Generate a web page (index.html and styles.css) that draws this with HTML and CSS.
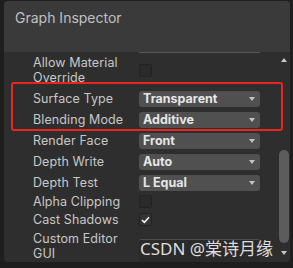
FILE: index.html
```html
<!DOCTYPE html>
<html lang="en">
<head>
    <meta charset="UTF-8">
    <meta name="viewport" content="width=device-width, initial-scale=1.0">
    <title>Graph Inspector</title>
    <link rel="stylesheet" href="styles.css">
</head>
<body>
    <div class="panel">
        <div class="header">Graph Inspector</div>
        <div class="body">
            <div class="fields">
                <div class="cut-field"></div>
                <div class="row tall">
                    <div class="label">Allow Material<br>Override</div>
                    <span class="checkbox"></span>
                </div>
                <div class="row first-drop">
                    <div class="label">Surface Type</div>
                    <div class="dropdown">Transparent</div>
                </div>
                <div class="row">
                    <div class="label">Blending Mode</div>
                    <div class="dropdown">Additive</div>
                </div>
                <div class="row">
                    <div class="label">Render Face</div>
                    <div class="dropdown">Front</div>
                </div>
                <div class="row">
                    <div class="label">Depth Write</div>
                    <div class="dropdown">Auto</div>
                </div>
                <div class="row">
                    <div class="label">Depth Test</div>
                    <div class="dropdown">L Equal</div>
                </div>
                <div class="row check-row short">
                    <div class="label">Alpha Clipping</div>
                    <span class="checkbox"></span>
                </div>
                <div class="row check-row">
                    <div class="label">Cast Shadows</div>
                    <span class="checkbox checked">
                        <svg width="9" height="8" viewBox="0 0 9 8"><path d="M1 4.2 L3.4 6.4 L8 1.2" fill="none" stroke="#f0f0f0" stroke-width="1.6"/></svg>
                    </span>
                </div>
                <div class="row tall editor-row">
                    <div class="label">Custom Editor<br>GUI</div>
                    <div class="object-field"></div>
                </div>
            </div>
            <div class="scrollbar">
                <span class="arrow up"></span>
                <div class="thumb"></div>
                <span class="arrow down"></span>
            </div>
        </div>
        <div class="highlight"></div>
    </div>
    <div class="watermark">CSDN @棠诗月缘</div>
</body>
</html>
```

FILE: styles.css
```css
body {
    margin: 0;
    padding: 1px 3px 0 4px;
    width: 286px;
    height: 267px;
    background-color: #1e1e1e;
    font-family: Inter, "Noto Sans", sans-serif;
    position: relative;
}
.panel {
    position: relative;
    height: 261px;
    background-color: #2e2e2e;
    border-radius: 4px;
    overflow: hidden;
}
.header {
    height: 51px;
    background-color: #3a3a3a;
    color: #c0c0c0;
    font-size: 14px;
    line-height: 34px;
    padding-left: 11px;
}
.body {
    display: flex;
    height: 210px;
}
.fields {
    flex: 1;
    padding-left: 29px;
}
.cut-field {
    margin-left: 106px;
    width: 121px;
    height: 1px;
    background-color: #575757;
}
.row {
    display: flex;
    align-items: center;
    height: 21px;
}
.row.tall {
    height: 30px;
    margin-top: 2px;
}
.row.first-drop {
    margin-top: 3px;
}
.row.check-row {
    height: 19px;
}
.row.short {
    height: 17px;
}
.label {
    width: 106px;
    color: #c8c8c8;
    font-size: 12.5px;
    letter-spacing: 0.1px;
    line-height: 15px;
}
.dropdown {
    position: relative;
    width: 121px;
    height: 16px;
    box-sizing: border-box;
    padding-left: 4px;
    background-color: #505050;
    border-radius: 3px;
    color: #e6e6e6;
    font-size: 12.5px;
    font-weight: 700;
    line-height: 16px;
}
.dropdown::after {
    content: "";
    position: absolute;
    right: 5px;
    top: 6px;
    border-left: 3.5px solid transparent;
    border-right: 3.5px solid transparent;
    border-top: 4px solid #c4c4c4;
}
.checkbox {
    display: flex;
    align-items: center;
    justify-content: center;
    width: 13px;
    height: 13px;
    box-sizing: border-box;
    background-color: #2a2a2a;
    border: 1px solid #222;
    border-radius: 2px;
}
.checkbox.checked {
    background-color: #333;
}
.editor-row {
    align-items: flex-start;
    margin-top: 0;
}
.object-field {
    margin-top: 8px;
    width: 121px;
    height: 24px;
    box-sizing: border-box;
    background-color: #2a2a2a;
    border-top: 1px solid #4c4c4c;
    border-radius: 2px;
}
.scrollbar {
    width: 12px;
    display: flex;
    flex-direction: column;
    align-items: center;
}
.arrow {
    width: 0;
    height: 0;
    border-left: 3.5px solid transparent;
    border-right: 3.5px solid transparent;
}
.arrow.up {
    margin-top: 6px;
    border-bottom: 4px solid #c8c8c8;
}
.arrow.down {
    margin-top: 8px;
    border-top: 4px solid #c8c8c8;
}
.thumb {
    margin-top: 88px;
    width: 10px;
    height: 93px;
    background-color: #5c5c5c;
    border-radius: 5px;
}
.highlight {
    position: absolute;
    left: 7px;
    top: 81px;
    width: 272px;
    height: 49px;
    box-sizing: border-box;
    border: 2px solid #e8261f;
    border-radius: 3px;
}
.watermark {
    position: absolute;
    left: 140px;
    top: 238px;
    color: rgba(255, 255, 255, 0.85);
    font-family: "Noto Sans", "Noto Sans CJK SC", sans-serif;
    font-size: 17px;
    line-height: 22px;
}
```
